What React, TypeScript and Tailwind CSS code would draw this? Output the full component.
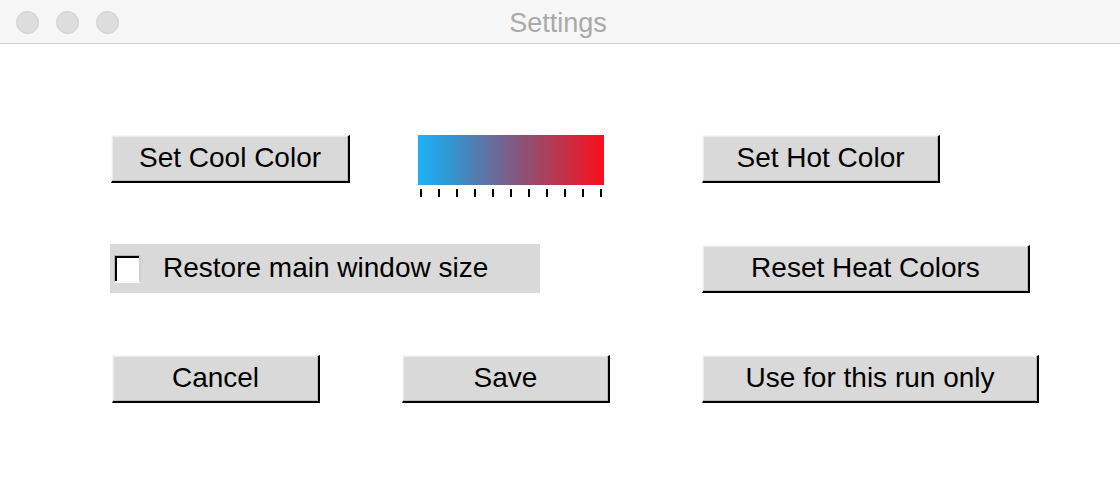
import type { ReactNode } from 'react';

// Tk-style settings dialog: raised grey buttons, a heat gradient with ticks.

function TkButton({ width, className = '', children }: { width: string; className?: string; children: ReactNode }) {
  return (
    <button
      className={`${width} ${className} flex h-[48px] items-center justify-center border-t border-l border-r-2 border-b-2 border-t-[#f7f7f7] border-l-[#f7f7f7] border-r-black border-b-black bg-[#d9d9d9] pb-[1px] text-[28px] leading-none text-black shadow-[inset_-1px_-1px_0_#b9b9b9,inset_1px_1px_0_#ececec]`}
    >
      {children}
    </button>
  );
}

function Dot() {
  return <span className="h-[23px] w-[23px] rounded-full border border-[#cfcfcf] bg-[#dddddd]" />;
}

export default function App() {
  const ticks = Array.from({ length: 11 });
  return (
    <div className="h-[494px] w-[1120px] overflow-hidden bg-white font-['Liberation_Sans',Arial,sans-serif]">
      {/* title bar */}
      <div className="grid h-[44px] grid-cols-[1fr_auto_1fr] items-center border-b border-[#d2d2d2] bg-[#f6f6f6]">
        <div className="flex items-center gap-[17px] pl-[16px] pt-[1px]">
          <Dot />
          <Dot />
          <Dot />
        </div>
        <span className="pr-[4px] pt-[3px] text-[27px] leading-none text-[#a9a9a9]">Settings</span>
        <div />
      </div>

      <div className="pl-[110px] pt-[91px]">
        {/* row 1 */}
        <div className="flex h-[109px] items-start">
          <TkButton width="w-[239px]" className="ml-[1px]">Set Cool Color</TkButton>
          <div className="ml-[68px] w-[186px]">
            <div className="h-[50px] bg-[linear-gradient(to_right,#1fb1f8,#2e9ad7_15%,#7d5c86_50%,#c62f45_80%,#fb0e1d)]" />
            <div className="mt-[4px] flex h-[8px] justify-between px-[2px]">
              {ticks.map((_, i) => (
                <span key={i} className="h-[8px] w-[2px] bg-black" />
              ))}
            </div>
          </div>
          <TkButton width="w-[238px]" className="ml-[98px]">Set Hot Color</TkButton>
        </div>

        {/* row 2 */}
        <div className="flex h-[111px] items-start">
          <label className="flex h-[49px] w-[430px] items-center bg-[#d9d9d9]">
            <span className="ml-[4px] flex h-[28px] w-[27px] border-t border-l border-b-2 border-r-2 border-t-[#b3b3b3] border-l-[#b3b3b3] border-b-[#f7f7f7] border-r-[#cfcfcf]">
              <span className="h-full w-full border-t-2 border-l-2 border-black bg-white" />
            </span>
            <span className="ml-[22px] pb-[1px] text-[28px] leading-none text-black">Restore main window size</span>
          </label>
          <TkButton width="w-[328px]" className="ml-[162px] mt-[1px]">Reset Heat Colors</TkButton>
        </div>

        {/* row 3 */}
        <div className="flex items-start">
          <TkButton width="w-[208px]" className="ml-[2px]">Cancel</TkButton>
          <TkButton width="w-[208px]" className="ml-[82px]">Save</TkButton>
          <TkButton width="w-[337px]" className="ml-[92px]">Use for this run only</TkButton>
        </div>
      </div>
    </div>
  );
}
